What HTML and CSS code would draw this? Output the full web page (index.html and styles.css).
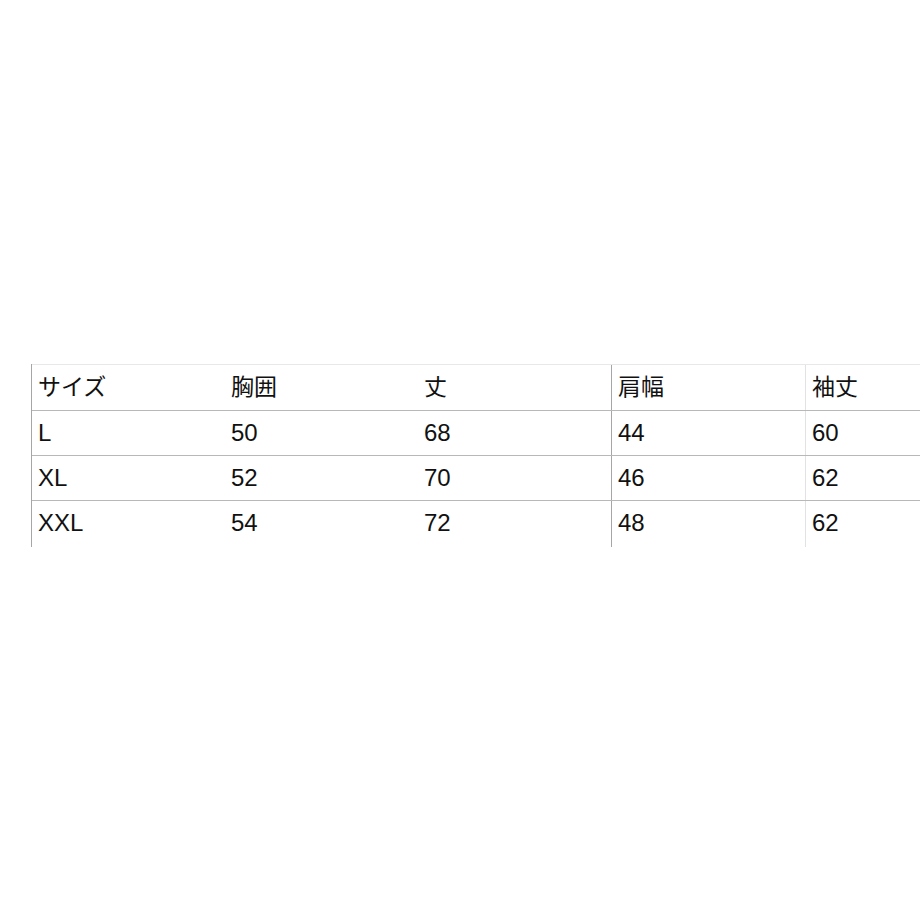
FILE: index.html
```html
<!DOCTYPE html>
<html lang="ja">
<head>
<meta charset="utf-8">
<title>サイズ表</title>
<link rel="stylesheet" href="styles.css">
</head>
<body>
<div class="sheet">
  <div class="size-table">
    <div class="row head">
      <div class="cell">サイズ</div>
      <div class="cell">胸囲</div>
      <div class="cell">丈</div>
      <div class="cell c4">肩幅</div>
      <div class="cell c5">袖丈</div>
    </div>
    <div class="row">
      <div class="cell">L</div>
      <div class="cell">50</div>
      <div class="cell">68</div>
      <div class="cell c4">44</div>
      <div class="cell c5">60</div>
    </div>
    <div class="row">
      <div class="cell">XL</div>
      <div class="cell">52</div>
      <div class="cell">70</div>
      <div class="cell c4">46</div>
      <div class="cell c5">62</div>
    </div>
    <div class="row last">
      <div class="cell">XXL</div>
      <div class="cell">54</div>
      <div class="cell">72</div>
      <div class="cell c4">48</div>
      <div class="cell c5">62</div>
    </div>
  </div>
</div>
</body>
</html>
```

FILE: styles.css
```css
html, body {
  margin: 0;
  padding: 0;
  background: #ffffff;
}
body {
  width: 920px;
  height: 920px;
  overflow: hidden;
  font-family: "Liberation Sans", Arial, "Noto Sans CJK JP", sans-serif;
  color: #111111;
}
.sheet {
  padding: 364px 0 0 31px;
}
.size-table {
  width: 889px;
  border-left: 1px solid #a6a6a6;
}
.row {
  display: grid;
  grid-template-columns: 193px 193px 193px 194px 1fr;
  height: 44px;
  border-top: 1px solid #b8b8b8;
}
.row.head {
  height: 45px;
  border-top: 1px solid #e8e8e8;
}
.row.last {
  height: 46px;
}
.cell {
  padding-left: 6px;
  font-size: 24px;
  line-height: 44px;
  white-space: nowrap;
}
.head .cell {
  font-size: 23px;
}
.cell.c4 {
  border-left: 1px solid #a6a6a6;
}
.cell.c5 {
  border-left: 1px solid #e2e2e2;
}
```
